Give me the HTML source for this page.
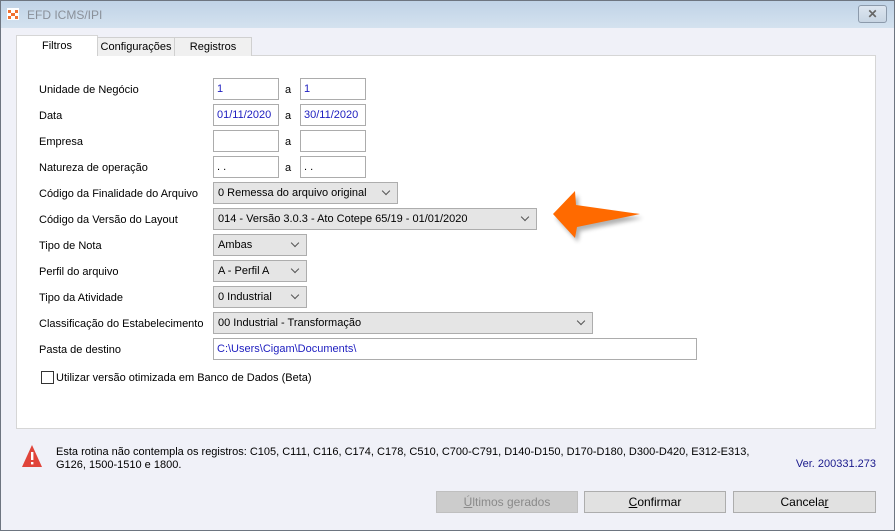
<!DOCTYPE html>
<html><head><meta charset="utf-8"><style>
*{box-sizing:border-box;margin:0;padding:0}
body{width:895px;height:531px;overflow:hidden;font-family:"Liberation Sans",sans-serif;font-size:11px;color:#000;background:#f0f1f8;position:relative}
.frame{position:absolute;left:0;top:0;width:895px;height:531px;border:1px solid #6d7580;pointer-events:none}
.title{position:absolute;left:0;top:0;width:895px;height:28px;background:linear-gradient(#bfd2e6,#d4e2ef)}
.title span{position:absolute;left:27px;top:8px;color:#8a9099;font-size:12px}
.ico{position:absolute;left:7px;top:8px;width:12px;height:12px;background:#fff}
.close{position:absolute;left:858px;top:5px;width:29px;height:18px;border:1px solid #8c9aab;border-radius:3px;background:linear-gradient(#dde6f0,#c8d5e3);text-align:center;font-size:12px;line-height:16px;color:#666;font-weight:bold}
.a{position:absolute}
.tab{position:absolute;top:37px;height:19px;border:1px solid #d0d0d0;border-bottom:none;background:#f0f0f0;text-align:center;line-height:18px;font-size:11px}
.panel{position:absolute;left:16px;top:55px;width:860px;height:374px;background:#fff;border:1px solid #d6d6d6}
.lbl{position:absolute;left:39px}
.in{position:absolute;height:22px;border:1px solid #acacac;background:#fff;color:#2020c0;padding-left:3px;line-height:21px}
.sel{position:absolute;height:22px;border:1px solid #adadad;background:#e5e5e5;padding-left:4px;line-height:21px}
.sel i{position:absolute;right:8px;top:5px;width:6px;height:6px;border-right:1px solid #555;border-bottom:1px solid #555;transform:rotate(45deg)}
.btn{position:absolute;top:491px;height:22px;border:1px solid #adadad;background:#e1e1e1;text-align:center;line-height:20px;font-size:12px}
</style></head><body>
<div class="title"><svg class="ico" width="12" height="12"><rect width="12" height="12" fill="#fff"/><path d="M1 2h3v3H1zM8 2h3v3H8zM4 5h4v3H4zM1 8h3v3H1zM8 8h3v3H8z" fill="#f07030"/></svg><span>EFD ICMS/IPI</span><div class="close">✕</div></div>
<div class="panel"></div>
<div class="tab" style="left:16px;width:82px;top:35px;height:21px;background:#fff;border-color:#d6d6d6;line-height:20px">Filtros</div>
<div class="tab" style="left:97px;width:78px">Configurações</div>
<div class="tab" style="left:174px;width:78px">Registros</div>

<div class="lbl" style="top:84px">Unidade de Negócio</div>
<div class="in" style="left:213px;top:78px;width:66px">1</div><div class="a" style="left:285px;top:84px">a</div><div class="in" style="left:300px;top:78px;width:66px">1</div>
<div class="lbl" style="top:110px">Data</div>
<div class="in" style="left:213px;top:104px;width:66px">01/11/2020</div><div class="a" style="left:285px;top:110px">a</div><div class="in" style="left:300px;top:104px;width:66px">30/11/2020</div>
<div class="lbl" style="top:136px">Empresa</div>
<div class="in" style="left:213px;top:130px;width:66px"></div><div class="a" style="left:285px;top:136px">a</div><div class="in" style="left:300px;top:130px;width:66px"></div>
<div class="lbl" style="top:162px">Natureza de operação</div>
<div class="in" style="left:213px;top:156px;width:66px;color:#000"> . .</div><div class="a" style="left:285px;top:162px">a</div><div class="in" style="left:300px;top:156px;width:66px;color:#000"> . .</div>
<div class="lbl" style="top:188px">Código da Finalidade do Arquivo</div>
<div class="sel" style="left:213px;top:182px;width:185px">0 Remessa do arquivo original<i></i></div>
<div class="lbl" style="top:214px">Código da Versão do Layout</div>
<div class="sel" style="left:213px;top:208px;width:324px">014 - Versão 3.0.3 - Ato Cotepe 65/19 - 01/01/2020<i></i></div>
<div class="lbl" style="top:240px">Tipo de Nota</div>
<div class="sel" style="left:213px;top:234px;width:94px">Ambas<i></i></div>
<div class="lbl" style="top:266px">Perfil do arquivo</div>
<div class="sel" style="left:213px;top:260px;width:94px">A - Perfil A<i></i></div>
<div class="lbl" style="top:292px">Tipo da Atividade</div>
<div class="sel" style="left:213px;top:286px;width:94px">0 Industrial<i></i></div>
<div class="lbl" style="top:318px">Classificação do Estabelecimento</div>
<div class="sel" style="left:213px;top:312px;width:380px">00 Industrial - Transformação<i></i></div>
<div class="lbl" style="top:344px">Pasta de destino</div>
<div class="in" style="left:213px;top:338px;width:484px">C:\Users\Cigam\Documents\</div>
<div class="a" style="left:41px;top:371px;width:13px;height:13px;border:1px solid #333;background:#fff"></div>
<div class="a" style="left:56px;top:372px">Utilizar versão otimizada em Banco de Dados (Beta)</div>

<svg class="a" style="left:545px;top:185px" width="105" height="60"><defs><filter id="b"><feGaussianBlur stdDeviation="2"/></filter></defs><polygon points="8,29 30,6 31,20 95,29 32,42 30,53" fill="#000" opacity=".3" filter="url(#b)" transform="translate(3,4)"/><polygon points="8,29 30,6 31,20 95,29 32,42 30,53" fill="#ff6a00"/></svg>

<svg class="a" style="left:21px;top:444px" width="22" height="24"><polygon points="11,1 21,23 1,23" fill="#e0443a"/><rect x="10" y="8" width="2.4" height="8" fill="#fff"/><rect x="10" y="18" width="2.4" height="2.4" fill="#fff"/></svg>
<div class="a" style="left:56px;top:446px;line-height:13px">Esta rotina não contempla os registros: C105, C111, C116, C174, C178, C510, C700-C791, D140-D150, D170-D180, D300-D420, E312-E313,<br>G126, 1500-1510 e 1800.</div>
<div class="a" style="right:19px;top:458px;color:#1a1a8c">Ver. 200331.273</div>

<div class="btn" style="left:436px;width:142px;color:#8a8a8a;background:#cccccc;border-color:#bfbfbf"><u>Ú</u>ltimos gerados</div>
<div class="btn" style="left:584px;width:142px"><u>C</u>onfirmar</div>
<div class="btn" style="left:733px;width:143px">Cancela<u>r</u></div>
<div class="frame"></div>
</body></html>
